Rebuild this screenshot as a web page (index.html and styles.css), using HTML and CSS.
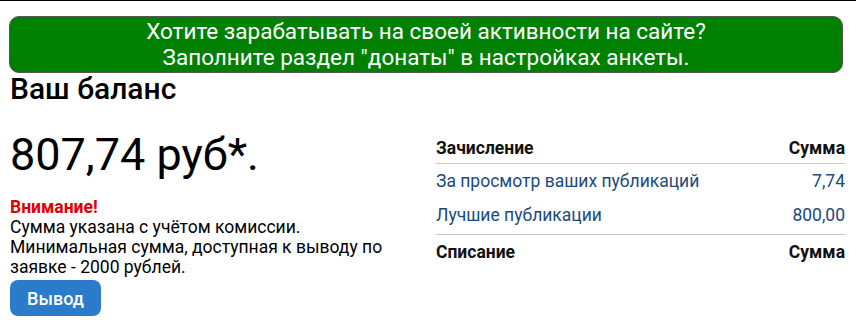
FILE: index.html
```html
<!DOCTYPE html>
<html lang="ru">
<head>
<meta charset="utf-8">
<title>Ваш баланс</title>
<link rel="stylesheet" href="styles.css">
</head>
<body>
<div class="topline"></div>
<div class="page">
  <div class="banner">Хотите зарабатывать на своей активности на сайте?<br>Заполните раздел "донаты" в настройках анкеты.</div>
  <h1 class="title">Ваш баланс</h1>
  <div class="cols">
    <div class="col-left">
      <div class="amount">807,74 руб*.</div>
      <div class="note">
        <div class="warn">Внимание!</div>
        <div>Сумма указана с учётом комиссии.<br>Минимальная сумма, доступная к выводу по заявке - 2000 рублей.</div>
      </div>
      <button class="btn">Вывод</button>
    </div>
    <div class="col-right">
      <table class="tbl">
        <tr class="head first"><th>Зачисление</th><th class="num">Сумма</th></tr>
        <tr class="row"><td>За просмотр ваших публикаций</td><td class="num">7,74</td></tr>
        <tr class="row last"><td>Лучшие публикации</td><td class="num">800,00</td></tr>
        <tr class="head second"><th>Списание</th><th class="num">Сумма</th></tr>
      </table>
    </div>
  </div>
</div>
</body>
</html>
```
FILE: styles.css
```css
html, body {
  margin: 0;
  padding: 0;
  background: #fff;
}
body {
  font-family: Roboto, "Liberation Sans", Arial, sans-serif;
  color: #000;
  font-size: 17.5px;
}
.topline {
  height: 1px;
  background: #000;
}
.page {
  padding: 0 10px;
}
.banner {
  margin: 15px 3px 0 -1px;
  background: #008000;
  border: 1px solid #555;
  border-radius: 10px;
  color: #fff;
  text-align: center;
  font-size: 22.5px;
  line-height: 26px;
  padding: 1px 0 2px;
}
.title {
  margin: 0;
  font-size: 30px;
  font-weight: 500;
  line-height: 32px;
}
.cols {
  display: flex;
}
.col-left {
  width: 418px;
}
.col-right {
  flex: 1;
  padding: 25px 1px 0 8px;
}
.amount {
  margin-top: 23px;
  font-size: 45px;
  line-height: 54px;
}
.note {
  margin-top: 15px;
  line-height: 20px;
}
.warn {
  color: #e00000;
  font-weight: 700;
}
.btn {
  display: block;
  margin-top: 3px;
  width: 91px;
  height: 36px;
  background: #2a7bc9;
  border: none;
  border-radius: 8px;
  color: #fff;
  font-family: inherit;
  font-size: 18px;
  font-weight: 500;
  padding: 0;
}
.tbl {
  width: 100%;
  border-collapse: collapse;
}
.tbl th, .tbl td {
  text-align: left;
  line-height: 20px;
}
.tbl .num {
  text-align: right;
}
.tbl .head th {
  font-weight: 700;
  color: #111;
}
.tbl .first th {
  padding: 8px 0 5px;
  border-bottom: 1px solid #c8c8c8;
}
.tbl .row td {
  color: #1b4a7e;
  padding: 7px 0 6px;
}
.tbl .last td {
  padding-top: 8px;
  padding-bottom: 9px;
  border-bottom: 1px solid #c8c8c8;
}
.tbl .second th {
  padding: 7px 0 6px;
}
```
